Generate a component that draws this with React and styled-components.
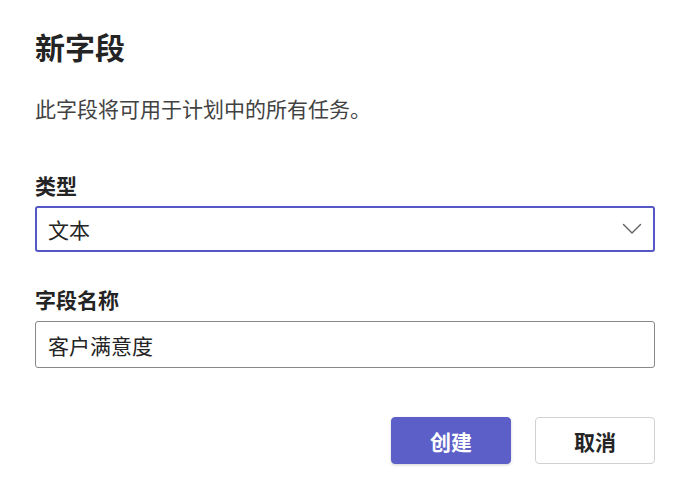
import React, { useState } from 'react';
import styled, { createGlobalStyle } from 'styled-components';

const GlobalStyle = createGlobalStyle`
  html, body {
    margin: 0;
    padding: 0;
    background: #ffffff;
  }
  body {
    font-family: "Noto Sans CJK SC", "Noto Sans", "Liberation Sans", sans-serif;
    color: #242424;
  }
`;

const Dialog = styled.div`
  width: 692px;
  height: 498px;
  box-sizing: border-box;
  padding: 26px 37px 0 35px;
  display: flex;
  flex-direction: column;
`;

const Title = styled.h1`
  margin: 0;
  font-size: 30px;
  line-height: 40px;
  font-weight: 700;
  color: #242424;
`;

const Description = styled.p`
  margin: 27px 0 0;
  font-size: 21px;
  line-height: 30px;
  color: #424242;
`;

const Field = styled.div`
  display: flex;
  flex-direction: column;
  gap: ${(p) => p.$gap}px;
  margin-top: ${(p) => p.$top}px;
`;

const Label = styled.label`
  font-size: 21px;
  line-height: 28px;
  font-weight: 700;
  color: #242424;
`;

const SelectBox = styled.div`
  height: 46px;
  box-sizing: border-box;
  border: 2px solid #5558c4;
  border-radius: 3px;
  display: flex;
  align-items: center;
  justify-content: space-between;
  padding: 0 11px 0 11px;
  font-size: 21px;
  color: #242424;
  cursor: pointer;
`;

const TextInput = styled.input`
  height: 47px;
  box-sizing: border-box;
  border: 1px solid #8a8886;
  border-radius: 3px;
  padding: 0 12px;
  font-family: inherit;
  font-size: 21px;
  color: #242424;
  outline: none;
  background: #fff;
`;

const Actions = styled.div`
  display: flex;
  justify-content: flex-end;
  gap: 24px;
  margin-top: 49px;
`;

const Button = styled.button`
  width: 120px;
  height: 47px;
  border-radius: 4px;
  font-family: inherit;
  font-size: 21px;
  font-weight: 700;
  cursor: pointer;
  border: 1px solid ${(p) => (p.$primary ? '#5b5fc7' : '#d1d1d1')};
  background: ${(p) => (p.$primary ? '#5b5fc7' : '#ffffff')};
  color: ${(p) => (p.$primary ? '#ffffff' : '#242424')};
  box-shadow: ${(p) => (p.$primary ? '0 1px 3px rgba(0,0,0,0.18)' : 'none')};
`;

const Chevron = () => (
  <svg width="20" height="12" viewBox="0 0 20 12" fill="none">
    <path d="M1.5 1.5 L10 10 L18.5 1.5" stroke="#616161" strokeWidth="1.4" strokeLinecap="round" strokeLinejoin="round" />
  </svg>
);

export default function App() {
  const [name, setName] = useState('客户满意度');

  return (
    <>
      <GlobalStyle />
      <Dialog>
        <Title>新字段</Title>
        <Description>此字段将可用于计划中的所有任务。</Description>
        <Field $top={48} $gap={7}>
          <Label>类型</Label>
          <SelectBox>
            <span>文本</span>
            <Chevron />
          </SelectBox>
        </Field>
        <Field $top={33} $gap={8}>
          <Label>字段名称</Label>
          <TextInput value={name} onChange={(e) => setName(e.target.value)} />
        </Field>
        <Actions>
          <Button $primary>创建</Button>
          <Button>取消</Button>
        </Actions>
      </Dialog>
    </>
  );
}
